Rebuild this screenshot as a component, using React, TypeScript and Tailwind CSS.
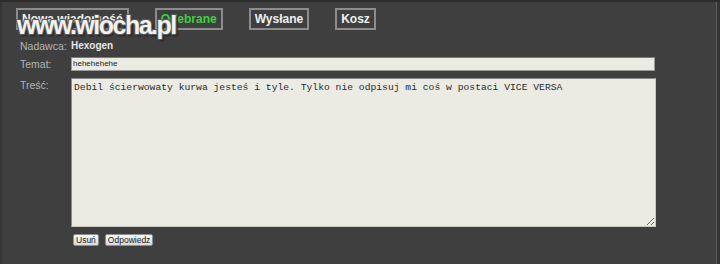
import React from "react";

const tabs = [
  { label: "Nowa wiadomość", active: false },
  { label: "Odebrane", active: true },
  { label: "Wysłane", active: false },
  { label: "Kosz", active: false },
];

const body =
  "Debil ścierwowaty kurwa jesteś i tyle. Tylko nie odpisuj mi coś w postaci VICE VERSA";

export default function App() {
  return (
    <div className="relative w-[720px] h-[264px] overflow-hidden bg-[#2c2c2c] font-['Liberation_Sans',Arial,sans-serif]">
      <div className="flex h-full pt-[2px]">
        <div className="flex-1 flex flex-col bg-[#3f3f3f] border-l-[2px] border-[#353535] border-r border-r-[#5e5e5e]">
          {/* zakładki */}
          <div className="flex gap-[26px] pl-[14px] pt-[6px]">
            {tabs.map((t) => (
              <div
                key={t.label}
                className={`h-[22px] px-[4px] flex items-center border-2 border-[#8c8c8c] text-[12px] font-bold leading-none ${
                  t.active ? "text-[#3fd13f]" : "text-[#f0f0f0]"
                }`}
              >
                {t.label}
              </div>
            ))}
          </div>

          <div className="grid grid-cols-[51px_585px] pl-[18px] mt-[10px] text-[10.5px] leading-none">
            <div className="h-[12px] flex items-center text-[#b4b4b4]">Nadawca:</div>
            <div className="h-[12px] flex items-center font-bold text-[#e6e6e6] text-[10px]">Hexogen</div>

            <div className="mt-[5px] h-[14px] flex items-center text-[#b4b4b4]">Temat:</div>
            <div className="mt-[5px] h-[14px] w-[584px] bg-[#ebebe4] border border-[#9a9a9a] border-t-[#7a7a7a] flex items-center px-[1px] text-[8px] text-[#222]">
              hehehehehe
            </div>

            <div className="mt-[7px] pt-[2px] text-[#b4b4b4]">Treść:</div>
            <textarea
              readOnly
              defaultValue={body}
              className="mt-[7px] block h-[149px] w-[585px] bg-[#ebebe4] border border-[#c8c8c2] border-t-[#8a8a8a] border-l-[#8a8a8a] px-[2px] pt-[3px] text-[9.7px] leading-[12px] text-[#2a2a2a] font-['Liberation_Mono','Courier_New',monospace] outline-none resize"
            />

            <div />
            <div className="mt-[7px] flex gap-[6px] pl-[2px]">
              {["Usuń", "Odpowiedz"].map((b) => (
                <button
                  key={b}
                  className="h-[12px] px-[2px] rounded-[2px] border border-[#8f8f8f] bg-gradient-to-b from-[#f7f7f7] to-[#d9d9d9] text-[8.5px] leading-none text-[#222]"
                >
                  {b}
                </button>
              ))}
            </div>
          </div>
        </div>
        <div className="w-[3px] bg-[#333]" />
      </div>

      {/* znak wodny */}
      <div className="absolute left-[17px] top-[10px] text-[25px] leading-[30px] font-bold tracking-[-1.5px] text-[#f2f2f2] [text-shadow:1px_1px_0_#5a5a5a,-1px_-1px_0_#5a5a5a,1px_-1px_0_#5a5a5a,-1px_1px_0_#5a5a5a,2px_2px_2px_#1e1e1e]">
        www.wiocha.pl
      </div>
    </div>
  );
}
